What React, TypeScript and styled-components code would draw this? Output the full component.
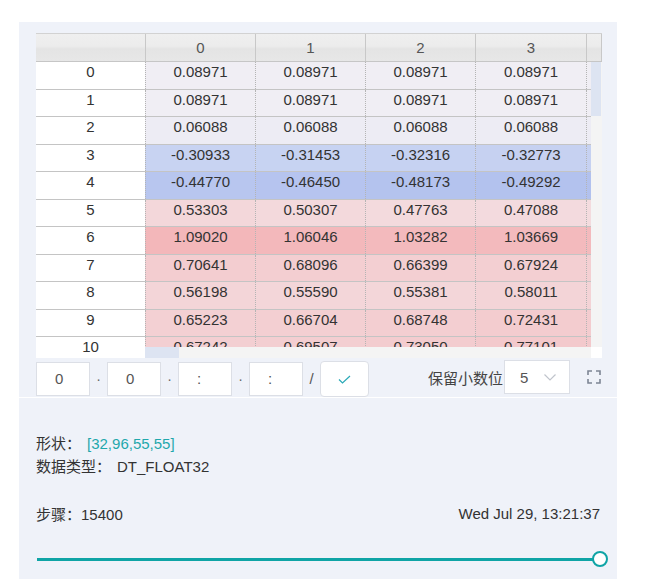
import styled, { createGlobalStyle } from "styled-components";

const GlobalStyle = createGlobalStyle`
  body {
    margin: 0;
    background: #ffffff;
    font-family: "Liberation Sans", "Noto Sans CJK SC", sans-serif;
    color: #333;
  }
`;

const Page = styled.div`
  padding: 22px 0 0 19px;
`;

const Panel = styled.div`
  width: 598px;
  min-height: 557px;
  background: #eff2f9;
`;

const TopSection = styled.div`
  padding: 11px 16px 1px 17px;
  border-bottom: 1px solid #ffffff;
`;

const Table = styled.div`
  width: 566px;
  font-size: 15px;
`;

const HeaderRow = styled.div`
  display: grid;
  grid-template-columns: 110px 110px 110px 110px 111px 15px;
  height: 29px;
  box-sizing: border-box;
  border-top: 1px solid #d2d2d2;
  border-bottom: 1px solid #c6c6c6;
  background: linear-gradient(#efefef 0%, #ececec 45%, #e4e4e4 55%, #e7e7e7 100%);
`;

const HeaderCell = styled.div`
  border-right: 1px solid #c8c8c8;
  display: flex;
  align-items: center;
  justify-content: center;
  color: #555;
`;

const Body = styled.div`
  display: flex;
`;

const IndexColumn = styled.div`
  width: 109px;
  height: 296px;
  overflow: hidden;
  background: #ffffff;
`;

const IndexCell = styled.div`
  height: 27.5px;
  box-sizing: border-box;
  border-bottom: 1px solid #c4c4c4;
  text-align: center;
  line-height: 20px;
`;

const DataPane = styled.div`
  width: 457px;
`;

const DataTop = styled.div`
  display: flex;
  height: 285px;
`;

const Rows = styled.div`
  width: 446px;
  height: 285px;
  overflow: hidden;
`;

const Row = styled.div`
  display: grid;
  grid-template-columns: 110px 110px 110px 111px 5px;
  height: 27.5px;
  box-sizing: border-box;
  border-bottom: 1px solid #c4c4c4;
`;

const DataCell = styled.div`
  border-left: 1px dotted #b4b4b4;
  text-align: center;
  line-height: 20px;
  overflow: hidden;
`;

const VScroll = styled.div`
  width: 11px;
  height: 285px;
  background: #f4f4f4;
`;

const VThumb = styled.div`
  height: 54px;
  width: 10px;
  background: #dde4f2;
`;

const HScrollRow = styled.div`
  display: flex;
  height: 11px;
`;

const HScrollTrack = styled.div`
  width: 446px;
  background: #f4f4f4;
`;

const HThumb = styled.div`
  width: 34px;
  height: 11px;
  background: #dde4f2;
`;

const Corner = styled.div`
  width: 11px;
  background: #ffffff;
`;

const Controls = styled.div`
  margin-top: 2px;
  height: 36px;
  display: flex;
  align-items: flex-start;
  justify-content: space-between;
`;

const Group = styled.div`
  display: flex;
  align-items: center;
`;

const IndexInput = styled.input`
  width: 54px;
  height: 34px;
  box-sizing: border-box;
  border: 1px solid #dcdfe6;
  background: #ffffff;
  padding: 0 0 0 18px;
  font-family: "Liberation Sans", sans-serif;
  font-size: 15px;
  color: #555;
  outline: none;
  &::placeholder {
    color: #555;
  }
`;

const Sep = styled.span`
  width: 17px;
  text-align: center;
  font-size: 14px;
  color: #666;
`;

const Slash = styled(Sep)`
  font-size: 15px;
  color: #555;
`;

const ConfirmButton = styled.button`
  width: 49px;
  height: 36px;
  margin-top: 1px;
  box-sizing: border-box;
  border: 1px solid #dcdfe6;
  border-radius: 4px;
  background: #ffffff;
  display: flex;
  align-items: center;
  justify-content: center;
  padding: 0;
`;

const Label = styled.span`
  font-size: 15px;
  color: #444;
  margin-right: 1px;
  font-family: "Noto Sans CJK SC", sans-serif;
`;

const Select = styled.div`
  width: 66px;
  height: 34px;
  box-sizing: border-box;
  border: 1px solid #dcdfe6;
  background: #ffffff;
  display: flex;
  align-items: center;
  padding-left: 15px;
  gap: 16px;
  font-size: 15px;
  color: #555;
`;

const FullscreenButton = styled.div`
  margin-left: 17px;
  width: 14px;
  height: 14px;
  display: flex;
`;

const InfoSection = styled.div`
  padding: 33px 17px 0 17px;
  font-size: 15px;
`;

const Line = styled.div`
  height: 23px;
  line-height: 23px;
  color: #333;
  font-family: "Noto Sans CJK SC", sans-serif;
  white-space: nowrap;
`;

const Value = styled.span<{ $teal?: boolean; $gap?: number }>`
  font-family: "Liberation Sans", sans-serif;
  color: ${(p) => (p.$teal ? "#1fa8ac" : "#333")};
  margin-left: ${(p) => p.$gap ?? 0}px;
`;

const StepRow = styled.div`
  margin-top: 25px;
  height: 23px;
  display: flex;
  justify-content: space-between;
  line-height: 23px;
`;

const SliderRow = styled.div`
  margin: 26px -8px 0 1px;
  height: 16px;
  display: flex;
  align-items: center;
`;

const Track = styled.div`
  flex: 1;
  height: 3px;
  background: #0fa4a6;
`;

const Handle = styled.div`
  width: 16px;
  height: 16px;
  margin-left: -8px;
  box-sizing: border-box;
  border: 2px solid #0fa4a6;
  border-radius: 50%;
  background: #ffffff;
`;

const data: number[][] = [
  [0.08971, 0.08971, 0.08971, 0.08971, 0.08971],
  [0.08971, 0.08971, 0.08971, 0.08971, 0.08971],
  [0.06088, 0.06088, 0.06088, 0.06088, 0.06088],
  [-0.30933, -0.31453, -0.32316, -0.32773, -0.33],
  [-0.4477, -0.4645, -0.48173, -0.49292, -0.5],
  [0.53303, 0.50307, 0.47763, 0.47088, 0.47],
  [1.0902, 1.06046, 1.03282, 1.03669, 1.04],
  [0.70641, 0.68096, 0.66399, 0.67924, 0.68],
  [0.56198, 0.5559, 0.55381, 0.58011, 0.6],
  [0.65223, 0.66704, 0.68748, 0.72431, 0.73],
  [0.67242, 0.69507, 0.7305, 0.77101, 0.78],
];

const anchors: [number, number[]][] = [
  [-0.5, [178, 193, 238]],
  [-0.3, [201, 212, 242]],
  [0.09, [240, 238, 244]],
  [0.5, [243, 217, 220]],
  [1.1, [243, 182, 185]],
];

function cellColor(v: number) {
  if (v <= anchors[0][0]) return `rgb(${anchors[0][1].join(",")})`;
  for (let i = 0; i < anchors.length - 1; i++) {
    const [a, ca] = anchors[i];
    const [b, cb] = anchors[i + 1];
    if (v <= b) {
      const t = (v - a) / (b - a);
      const c = ca.map((x, k) => Math.round(x + (cb[k] - x) * t));
      return `rgb(${c.join(",")})`;
    }
  }
  return `rgb(${anchors[anchors.length - 1][1].join(",")})`;
}

function CheckIcon() {
  return (
    <svg width="13" height="9" viewBox="0 0 13 9" fill="none">
      <path d="M1 4.5 L4.5 8 L12 1" stroke="#29a9b7" strokeWidth="1.2" />
    </svg>
  );
}

function ChevronIcon() {
  return (
    <svg width="12" height="7" viewBox="0 0 12 7" fill="none">
      <path d="M0.5 0.5 L6 6 L11.5 0.5" stroke="#c0c4cc" strokeWidth="1.2" />
    </svg>
  );
}

function FullscreenIcon() {
  return (
    <svg width="14" height="14" viewBox="0 0 14 14" fill="none">
      <path
        d="M1 5V1h4 M9 1h4v4 M13 9v4H9 M5 13H1V9"
        stroke="#7d8594"
        strokeWidth="1.6"
      />
    </svg>
  );
}

export default function App() {
  return (
    <>
      <GlobalStyle />
      <Page>
        <Panel>
          <TopSection>
            <Table>
              <HeaderRow>
                <HeaderCell />
                <HeaderCell>0</HeaderCell>
                <HeaderCell>1</HeaderCell>
                <HeaderCell>2</HeaderCell>
                <HeaderCell>3</HeaderCell>
                <HeaderCell />
              </HeaderRow>
              <Body>
                <IndexColumn>
                  {data.map((_, i) => (
                    <IndexCell key={i}>{i}</IndexCell>
                  ))}
                </IndexColumn>
                <DataPane>
                  <DataTop>
                    <Rows>
                      {data.map((row, i) => (
                        <Row key={i}>
                          {row.map((v, j) => (
                            <DataCell key={j} style={{ background: cellColor(v) }}>
                              {j < 4 ? v.toFixed(5) : ""}
                            </DataCell>
                          ))}
                        </Row>
                      ))}
                    </Rows>
                    <VScroll>
                      <VThumb />
                    </VScroll>
                  </DataTop>
                  <HScrollRow>
                    <HScrollTrack>
                      <HThumb />
                    </HScrollTrack>
                    <Corner />
                  </HScrollRow>
                </DataPane>
              </Body>
            </Table>
            <Controls>
              <Group>
                <IndexInput readOnly defaultValue="0" />
                <Sep>·</Sep>
                <IndexInput readOnly defaultValue="0" />
                <Sep>·</Sep>
                <IndexInput readOnly placeholder=":" />
                <Sep>·</Sep>
                <IndexInput readOnly placeholder=":" />
                <Slash>/</Slash>
                <ConfirmButton>
                  <CheckIcon />
                </ConfirmButton>
              </Group>
              <Group>
                <Label>保留小数位</Label>
                <Select>
                  <span>5</span>
                  <ChevronIcon />
                </Select>
                <FullscreenButton>
                  <FullscreenIcon />
                </FullscreenButton>
              </Group>
            </Controls>
          </TopSection>
          <InfoSection>
            <Line>
              形状：<Value $teal $gap={6}>[32,96,55,55]</Value>
            </Line>
            <Line>
              数据类型：<Value $gap={6}>DT_FLOAT32</Value>
            </Line>
            <StepRow>
              <Line>
                步骤：<Value>15400</Value>
              </Line>
              <Value>Wed Jul 29, 13:21:37</Value>
            </StepRow>
            <SliderRow>
              <Track />
              <Handle />
            </SliderRow>
          </InfoSection>
        </Panel>
      </Page>
    </>
  );
}
